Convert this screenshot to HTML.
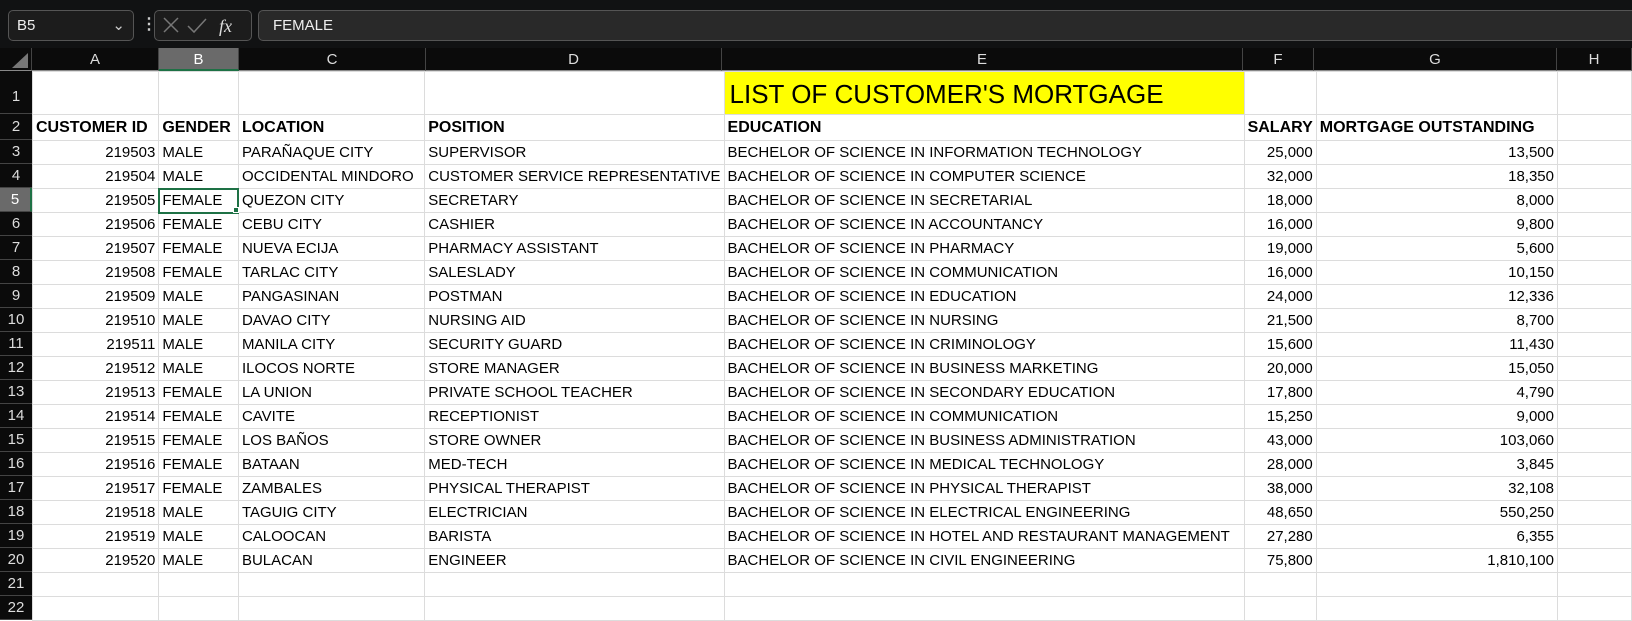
<!DOCTYPE html>
<html><head><meta charset="utf-8"><style>
*{margin:0;padding:0;box-sizing:border-box}
body{width:1632px;height:617px;overflow:hidden;background:#fff;font-family:"Liberation Sans",Arial,sans-serif;position:relative}
.top{position:absolute;left:0;top:0;width:1632px;height:48px;background:#111213}
.box{position:absolute;top:10px;height:31px;border:1px solid #555;border-radius:5px;background:#1c1c1c;color:#eee;font-size:15px;line-height:29px}
.ch{position:absolute;top:48px;height:23px;background:#0b0b0b;color:#ddd;font-size:15px;text-align:center;line-height:23px;border-right:1px solid #444;border-bottom:1px solid #888}
.rh{position:absolute;left:0;width:32px;background:#0b0b0b;color:#ddd;font-size:15px;text-align:center;border-bottom:1px solid #444}
.grid{position:absolute;left:32px;top:71px}
table{border-collapse:collapse;table-layout:fixed}
td{border:1px solid #dcdcdc;height:24px;font-size:15px;padding:0 3px;white-space:nowrap;overflow:visible;color:#000;line-height:22px}
td.r{text-align:right}
tr.h td{font-weight:bold;font-size:16px;height:26px}
</style></head><body>
<div class="top">
<div class="box" style="left:8px;width:126px;padding-left:8px">B5<span style="position:absolute;right:8px;top:0;color:#ccc">&#8964;</span></div>
<div style="position:absolute;left:141px;top:14px;color:#ccc;font-size:16px;font-weight:bold">&#8942;</div>
<div class="box" style="left:154px;width:98px;color:#888">
<svg width="96" height="29" style="position:absolute;left:0;top:0"><path d="M9 7l14 14M23 7L9 21" stroke="#777" stroke-width="1.5" fill="none"/><path d="M33 15l6 6 12-13" stroke="#777" stroke-width="1.5" fill="none"/><text x="64" y="21" fill="#ddd" font-family="Liberation Serif" font-style="italic" font-size="18">fx</text></svg></div>
<div class="box" style="left:258px;width:1380px;background:#292929;padding-left:14px">FEMALE</div>
</div>
<div class="ch" style="left:0;width:32px;background:#0b0b0b"><svg width="30" height="22"><path d="M27 20H11L27 5z" fill="#777"/></svg></div>
<div class="ch" style="left:32px;width:127px">A</div>
<div class="ch" style="left:159px;width:80px;background:#6a6a6a;border-bottom:2px solid #1e7145;color:#fff">B</div>
<div class="ch" style="left:239px;width:187px">C</div>
<div class="ch" style="left:426px;width:296px">D</div>
<div class="ch" style="left:722px;width:521px">E</div>
<div class="ch" style="left:1243px;width:71px">F</div>
<div class="ch" style="left:1314px;width:243px">G</div>
<div class="ch" style="left:1557px;width:75px">H</div>
<div class="rh" style="top:71px;height:43px;line-height:52px">1</div>
<div class="rh" style="top:114px;height:26px;line-height:26px">2</div>
<div class="grid"><table>
<colgroup><col style="width:127px"><col style="width:80px"><col style="width:187px"><col style="width:296px"><col style="width:521px"><col style="width:71px"><col style="width:243px"><col style="width:80px"></colgroup>
<tr><td style="height:43px"></td><td></td><td></td><td></td><td style="background:#ff0;font-size:26px;line-height:40px;vertical-align:bottom;padding-left:5px">LIST OF CUSTOMER'S MORTGAGE</td><td></td><td></td><td></td></tr>
<tr class="h"><td>CUSTOMER ID</td><td>GENDER</td><td>LOCATION</td><td>POSITION</td><td>EDUCATION</td><td>SALARY</td><td>MORTGAGE OUTSTANDING</td><td></td></tr>
<tr><td class="r">219503</td><td>MALE</td><td>PARAÑAQUE CITY</td><td>SUPERVISOR</td><td>BECHELOR OF SCIENCE IN INFORMATION TECHNOLOGY</td><td class="r">25,000</td><td class="r">13,500</td><td></td></tr>
<tr><td class="r">219504</td><td>MALE</td><td>OCCIDENTAL MINDORO</td><td>CUSTOMER SERVICE REPRESENTATIVE</td><td>BACHELOR OF SCIENCE IN COMPUTER SCIENCE</td><td class="r">32,000</td><td class="r">18,350</td><td></td></tr>
<tr><td class="r">219505</td><td style="outline:2px solid #1e7145;outline-offset:-1px">FEMALE</td><td>QUEZON CITY</td><td>SECRETARY</td><td>BACHELOR OF SCIENCE IN SECRETARIAL</td><td class="r">18,000</td><td class="r">8,000</td><td></td></tr>
<tr><td class="r">219506</td><td>FEMALE</td><td>CEBU CITY</td><td>CASHIER</td><td>BACHELOR OF SCIENCE IN ACCOUNTANCY</td><td class="r">16,000</td><td class="r">9,800</td><td></td></tr>
<tr><td class="r">219507</td><td>FEMALE</td><td>NUEVA ECIJA</td><td>PHARMACY ASSISTANT</td><td>BACHELOR OF SCIENCE IN PHARMACY</td><td class="r">19,000</td><td class="r">5,600</td><td></td></tr>
<tr><td class="r">219508</td><td>FEMALE</td><td>TARLAC CITY</td><td>SALESLADY</td><td>BACHELOR OF SCIENCE IN COMMUNICATION</td><td class="r">16,000</td><td class="r">10,150</td><td></td></tr>
<tr><td class="r">219509</td><td>MALE</td><td>PANGASINAN</td><td>POSTMAN</td><td>BACHELOR OF SCIENCE IN EDUCATION</td><td class="r">24,000</td><td class="r">12,336</td><td></td></tr>
<tr><td class="r">219510</td><td>MALE</td><td>DAVAO CITY</td><td>NURSING AID</td><td>BACHELOR OF SCIENCE IN NURSING</td><td class="r">21,500</td><td class="r">8,700</td><td></td></tr>
<tr><td class="r">219511</td><td>MALE</td><td>MANILA CITY</td><td>SECURITY GUARD</td><td>BACHELOR OF SCIENCE IN CRIMINOLOGY</td><td class="r">15,600</td><td class="r">11,430</td><td></td></tr>
<tr><td class="r">219512</td><td>MALE</td><td>ILOCOS NORTE</td><td>STORE MANAGER</td><td>BACHELOR OF SCIENCE IN BUSINESS MARKETING</td><td class="r">20,000</td><td class="r">15,050</td><td></td></tr>
<tr><td class="r">219513</td><td>FEMALE</td><td>LA UNION</td><td>PRIVATE SCHOOL TEACHER</td><td>BACHELOR OF SCIENCE IN SECONDARY EDUCATION</td><td class="r">17,800</td><td class="r">4,790</td><td></td></tr>
<tr><td class="r">219514</td><td>FEMALE</td><td>CAVITE</td><td>RECEPTIONIST</td><td>BACHELOR OF SCIENCE IN COMMUNICATION</td><td class="r">15,250</td><td class="r">9,000</td><td></td></tr>
<tr><td class="r">219515</td><td>FEMALE</td><td>LOS BAÑOS</td><td>STORE OWNER</td><td>BACHELOR OF SCIENCE IN BUSINESS ADMINISTRATION</td><td class="r">43,000</td><td class="r">103,060</td><td></td></tr>
<tr><td class="r">219516</td><td>FEMALE</td><td>BATAAN</td><td>MED-TECH</td><td>BACHELOR OF SCIENCE IN MEDICAL TECHNOLOGY</td><td class="r">28,000</td><td class="r">3,845</td><td></td></tr>
<tr><td class="r">219517</td><td>FEMALE</td><td>ZAMBALES</td><td>PHYSICAL THERAPIST</td><td>BACHELOR OF SCIENCE IN PHYSICAL THERAPIST</td><td class="r">38,000</td><td class="r">32,108</td><td></td></tr>
<tr><td class="r">219518</td><td>MALE</td><td>TAGUIG CITY</td><td>ELECTRICIAN</td><td>BACHELOR OF SCIENCE IN ELECTRICAL ENGINEERING</td><td class="r">48,650</td><td class="r">550,250</td><td></td></tr>
<tr><td class="r">219519</td><td>MALE</td><td>CALOOCAN</td><td>BARISTA</td><td>BACHELOR OF SCIENCE IN HOTEL AND RESTAURANT MANAGEMENT</td><td class="r">27,280</td><td class="r">6,355</td><td></td></tr>
<tr><td class="r">219520</td><td>MALE</td><td>BULACAN</td><td>ENGINEER</td><td>BACHELOR OF SCIENCE IN CIVIL ENGINEERING</td><td class="r">75,800</td><td class="r">1,810,100</td><td></td></tr>
<tr><td></td><td></td><td></td><td></td><td></td><td></td><td></td><td></td></tr>
<tr><td></td><td></td><td></td><td></td><td></td><td></td><td></td><td></td></tr>
</table></div>
<div class="rh" style="top:140px;height:24px;line-height:24px">3</div>
<div class="rh" style="top:164px;height:24px;line-height:24px">4</div>
<div class="rh" style="top:188px;height:24px;line-height:24px;background:#6a6a6a;color:#fff;border-right:2px solid #1e7145">5</div>
<div class="rh" style="top:212px;height:24px;line-height:24px">6</div>
<div class="rh" style="top:236px;height:24px;line-height:24px">7</div>
<div class="rh" style="top:260px;height:24px;line-height:24px">8</div>
<div class="rh" style="top:284px;height:24px;line-height:24px">9</div>
<div class="rh" style="top:308px;height:24px;line-height:24px">10</div>
<div class="rh" style="top:332px;height:24px;line-height:24px">11</div>
<div class="rh" style="top:356px;height:24px;line-height:24px">12</div>
<div class="rh" style="top:380px;height:24px;line-height:24px">13</div>
<div class="rh" style="top:404px;height:24px;line-height:24px">14</div>
<div class="rh" style="top:428px;height:24px;line-height:24px">15</div>
<div class="rh" style="top:452px;height:24px;line-height:24px">16</div>
<div class="rh" style="top:476px;height:24px;line-height:24px">17</div>
<div class="rh" style="top:500px;height:24px;line-height:24px">18</div>
<div class="rh" style="top:524px;height:24px;line-height:24px">19</div>
<div class="rh" style="top:548px;height:24px;line-height:24px">20</div>
<div class="rh" style="top:572px;height:24px;line-height:24px">21</div>
<div class="rh" style="top:596px;height:24px;line-height:24px">22</div>
<div style="position:absolute;left:233px;top:207px;width:6px;height:6px;background:#1e7145;border:1px solid #fff"></div>
</body></html>
